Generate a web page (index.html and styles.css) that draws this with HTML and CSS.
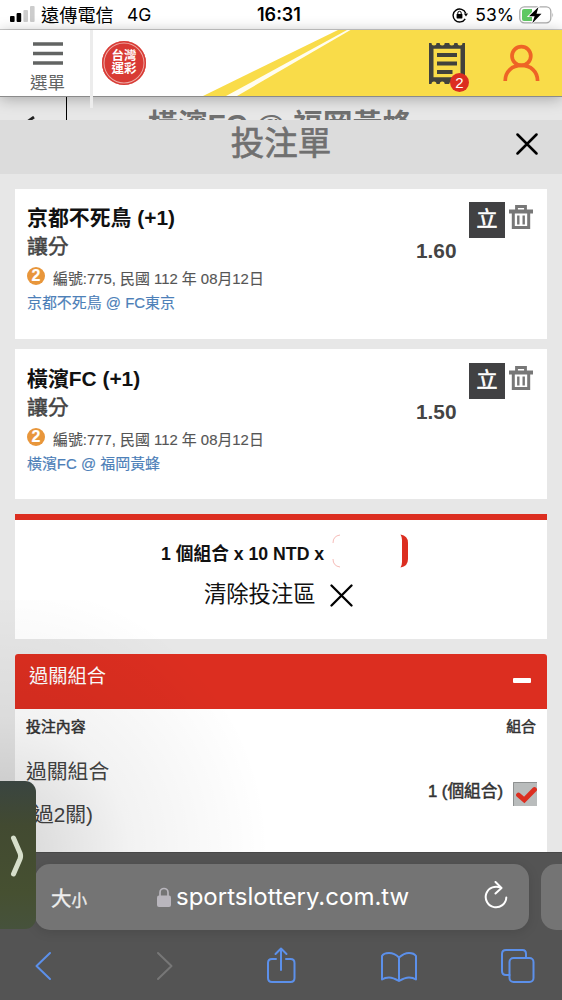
FILE: index.html
```html
<!DOCTYPE html>
<html lang="zh-Hant">
<head>
<meta charset="utf-8">
<title>投注單</title>
<link rel="stylesheet" href="styles.css">
</head>
<body>
<div class="phone">
  <div class="status">
    <svg class="signal" width="26" height="16" viewBox="0 0 26 16"><rect x="0" y="10" width="4.6" height="6" rx="1" fill="#000"/><rect x="6.6" y="7" width="4.6" height="9" rx="1" fill="#000"/><rect x="13.4" y="4" width="4.6" height="12" rx="1" fill="#ccc"/><rect x="20" y="0" width="4.6" height="16" rx="1" fill="#ccc"/></svg>
    <span class="carrier">遠傳電信</span><span class="net">4G</span>
    <span class="clock">16:31</span>
    <span class="power">
      <svg width="16" height="16" viewBox="0 0 16 16"><path d="M13.7 6.2A6.5 6.5 0 1 0 13.2 11.8" fill="none" stroke="#000" stroke-width="1.4"/><path d="M11.8 6.5h4.2l-2 3z"/><rect x="4.6" y="7" width="5.8" height="4.4" rx=".6"/><path d="M5.800 7.200V6a1.700 1.700 0 0 1 3.400 0v1.200" fill="none" stroke="#000" stroke-width="1"/></svg>
      <span class="percent">53%</span>
      <svg width="35" height="18" viewBox="0 0 35 18"><rect x=".8" y=".8" width="31" height="16" rx="4.5" fill="#fff" stroke="#aaa" stroke-width="1.3"/><path d="M5 3h8v12H5a2 2 0 0 1-2-2V5a2 2 0 0 1 2-2z" fill="#5fc863"/><path d="M33.400 6.500q1.600 2.500 0 5z" fill="#aaa"/><path d="M19.500 1 10 10.200h5.600L13.300 17.200 22.500 7.800h-5z" stroke="#fff" stroke-width="1.800" paint-order="stroke"/></svg>
    </span>
  </div>

  <div class="header">
    <svg class="ribbon" width="562" height="66" viewBox="0 0 562 66"><path d="M203 66 338 0H562V66z" fill="#f9dc49"/><path d="M226 66 347 0h3.500L237 66z" fill="#fffdf0"/></svg>
    <div class="menu">
      <svg width="30" height="24" viewBox="0 0 30 24"><path d="M0 2h30M0 11.5h30M0 21h30" stroke="#626463" stroke-width="3.6"/></svg>
      <span>選單</span>
    </div>
    <div class="logo"><span>台灣</span><span>運彩</span></div>
    <div class="tools">
      <div class="ticket">
        <svg width="37" height="42" viewBox="0 0 37 42"><path fill="#41423c" fill-rule="evenodd" d="M0 0h2.500a2.500 2.500 0 0 0 5 0h3.200a2.500 2.500 0 0 0 5 0h4.600a2.500 2.500 0 0 0 5 0h3.200a2.500 2.500 0 0 0 5 0H36v41h-2.500a2.500 2.500 0 0 0-5 0h-3.200a2.500 2.500 0 0 0-5 0h-4.600a2.500 2.500 0 0 0-5 0H7.500a2.500 2.500 0 0 0-5 0H0zM4.500 5.800v28.500h27V5.800z"/><path d="M8 12h20M8 20.500h20M8 29h15.500" stroke="#41423c" stroke-width="4.200"/></svg>
        <b class="badge">2</b>
      </div>
      <svg width="37" height="38" viewBox="0 0 37 38"><g fill="none" stroke="#ee6426" stroke-width="3.700"><circle cx="18.400" cy="12" r="9.400"/><path d="M2.200 37c0-9.800 7-15.600 16.200-15.600S34.600 27.200 34.600 37"/></g></svg>
    </div>
  </div>

  <div class="underlay">
    <svg class="back" width="8" height="5" viewBox="0 0 8 5"><path d="M0 6 7 1" stroke="#222" stroke-width="2.800"/></svg>
    <div class="match">橫濱FC @ 福岡黃蜂</div>
  </div>

  <div class="sheet-title">
    <h1>投注單</h1>
    <svg class="close" width="22" height="22" viewBox="0 0 22 22"><path d="M1.500 1.500 20.500 20.500M20.500 1.500 1.500 20.500" stroke="#000" stroke-width="2.500" stroke-linecap="round"/></svg>
  </div>

  <div class="sheet">
    <div class="card bet">
      <div class="info">
        <h2>京都不死鳥 (+1)</h2>
        <h3>讓分</h3>
        <p class="meta"><b class="dot">2</b><span>編號:775, 民國 112 年 08月12日</span></p>
        <a class="game">京都不死鳥 @ FC東京</a>
      </div>
      <div class="odds">1.60</div>
      <div class="stand">立</div>
      <svg class="trash" width="24" height="24" viewBox="0 0 24 24"><path d="M0 6.500h24" stroke="#777" stroke-width="4"/><path d="M7.500 6V1.500h9V6" fill="none" stroke="#777" stroke-width="2.800"/><path d="M4.300 7v15.500h15.400V7" fill="none" stroke="#777" stroke-width="3"/><path d="M9.300 10.500v9M14.700 10.500v9" stroke="#777" stroke-width="2.400"/></svg>
    </div>

    <div class="card bet second">
      <div class="info">
        <h2>橫濱FC (+1)</h2>
        <h3>讓分</h3>
        <p class="meta"><b class="dot">2</b><span>編號:777, 民國 112 年 08月12日</span></p>
        <a class="game">橫濱FC @ 福岡黃蜂</a>
      </div>
      <div class="odds">1.50</div>
      <div class="stand">立</div>
      <svg class="trash" width="24" height="24" viewBox="0 0 24 24"><path d="M0 6.500h24" stroke="#777" stroke-width="4"/><path d="M7.500 6V1.500h9V6" fill="none" stroke="#777" stroke-width="2.800"/><path d="M4.300 7v15.500h15.400V7" fill="none" stroke="#777" stroke-width="3"/><path d="M9.300 10.500v9M14.700 10.500v9" stroke="#777" stroke-width="2.400"/></svg>
    </div>

    <div class="card summary">
      <div class="stake"><span>1 個組合 x 10 NTD x</span>
        <svg width="76" height="34" viewBox="0 0 76 34"><path d="M8 1Q1 2 1 9M1 25q0 7 7 8" fill="none" stroke="#f3aaa5" stroke-width=".8"/><path d="M68.500.500Q76 1.500 76 9V25Q76 32.500 68.500 33.500 70 31 70 28V6Q70 3 68.500.500z" fill="#dc2e20"/></svg>
      </div>
      <div class="clear"><span>清除投注區</span>
        <svg width="23" height="23" viewBox="0 0 23 23"><path d="M1.500 1.500 21.500 21.500M21.500 1.500 1.500 21.500" stroke="#000" stroke-width="2.300" stroke-linecap="round"/></svg>
      </div>
    </div>

    <div class="combo">
      <div class="combo-head"><span>過關組合</span><i class="minus"></i></div>
      <div class="columns"><span>投注內容</span><span>組合</span></div>
      <div class="option">
        <div class="option-name">過關組合<br>(過2關)</div>
        <div class="option-count"><span>1 (個組合)</span>
          <svg width="24" height="24" viewBox="0 0 24 24"><path d="M0 0h24v24H0z" fill="#b9bcbc"/><path d="M.5 24V.5H24" fill="none" stroke="#8e9191"/><path d="m5.500 13 5.800 5L21.500 7.500" fill="none" stroke="#dc2e20" stroke-width="4.800" stroke-linecap="round"/></svg>
        </div>
      </div>
    </div>
  </div>

  <div class="browser">
    <div class="address-row">
      <div class="address">
        <span class="size">大<small>小</small></span>
        <span class="url"><svg width="14" height="21" viewBox="0 0 14 21"><rect y="8.500" width="14" height="11.500" rx="2" fill="#b9b6bd"/><path d="M3 9V5.500a4 4 0 0 1 8 0V9" fill="none" stroke="#b9b6bd" stroke-width="1.700"/></svg><span>sportslottery.com.tw</span></span>
        <svg class="reload" width="24" height="28" viewBox="0 0 24 28"><g fill="none" stroke="#fff" stroke-width="2" stroke-linecap="round" stroke-linejoin="round"><path d="M22.300 16.500A10.300 10.300 0 1 1 17 7"/><path d="m11.500 1 6 6-6 5.500"/></g></svg>
      </div>
      <div class="next-tab"></div>
    </div>
    <div class="toolbar">
      <svg width="562" height="70" viewBox="0 1 562 70"><g fill="none" stroke="#5c90ea" stroke-width="2" stroke-linecap="round" stroke-linejoin="round"><path d="M50 24 36.500 37 50 50"/><path d="M158 24l13.500 13L158 50" stroke="#777"/><path d="M276 30h-4q-4 0-4 4v15q0 4 4 4h18.500q4 0 4-4V34q0-4-4-4h-4.500M281 41V19.500M275.500 25l5.500-5.500L286.500 25"/><path d="M399 28.500Q394.500 24 389 24t-7 3v23.500q3-2 7-2t10 3.500q6-3.500 10-3.500t7 2V27q-2-3-7-3t-10 4.500V52"/><rect x="509.500" y="29" width="24" height="24" rx="4"/><path d="M509.500 46H506q-4 0-4-4V25q0-4 4-4h16.500q3.500 0 3.500 4v4"/></g></svg>
    </div>
  </div>

  <div class="shade"></div>
  <div class="drawer"><svg width="14" height="42" viewBox="0 0 14 42"><path d="M3.500 3 10 18q1.200 3 0 6L3.500 39" fill="none" stroke="#d7dfcb" stroke-width="5" stroke-linecap="round"/></svg></div>
</div>
</body>
</html>
```
FILE: styles.css
```css
* { box-sizing: border-box; }
body { margin: 0; font-family: "Liberation Sans", "Noto Sans CJK TC", sans-serif; color: #111; }
h1, h2, h3, p { margin: 0; }
svg { display: block; flex: none; }
span, b, h1, h2, h3, a { white-space: nowrap; }

.phone { position: relative; width: 562px; height: 1000px; overflow: hidden; background: #e7e7e7; display: flex; flex-direction: column; }

.status { height: 30px; flex: none; background: #fff; border-bottom: 1px solid #ccc; display: grid; grid-template-columns: 31px 86px 128px 1fr auto; align-items: center; padding: 1px 8px 0 10px; font-family: Inter, "Noto Sans CJK TC", sans-serif; line-height: 28px; color: #000; }
.signal { margin-top: -2px; }
.carrier { font-size: 18.200px; }
.net { font-size: 17.500px; }
.clock { font-size: 18px; font-weight: 600; padding-left: 2px; }
.power { display: flex; align-items: center; }
.percent { font-size: 17.500px; margin: 0 5px 0 7px; }

.header { position: relative; height: 67px; flex: none; background: #fff; border-bottom: 1px solid #8b8b8b; display: flex; box-shadow: 0 2px 14px rgba(0,0,0,.28); z-index: 2; }
.ribbon { position: absolute; left: 0; top: 0; z-index: -1; }
.menu { width: 93px; height: 78px; flex: none; border-right: 3px solid #ececec; display: flex; flex-direction: column; align-items: center; padding: 12px 0 0 5px; color: #626463; font-size: 17.500px; line-height: 26px; gap: 4px; }
.logo { width: 44px; height: 44px; margin: 11px 0 0 9px; border-radius: 50%; background: #d83a34; box-shadow: inset 0 0 0 1.500px #d83a34, inset 0 0 0 2.500px #eeaaa5; display: flex; flex-direction: column; align-items: center; padding-top: 9px; color: #fff; font-size: 12.500px; line-height: 13px; font-weight: 700; }
.tools { margin-left: auto; padding: 13px 22px 0 0; display: flex; gap: 37px; }
.tools > svg { margin-top: 1px; }
.ticket { position: relative; }
.badge { position: absolute; left: 21px; top: 30px; width: 19px; height: 19px; border-radius: 50%; background: #dc2e20; color: #fff; font-size: 15px; font-weight: 400; line-height: 19px; text-align: center; }

.underlay { height: 23px; flex: none; display: flex; overflow: hidden; }
.back { margin: 19px 0 0 27px; }
.match { margin-left: 31px; border-left: 1.500px solid #000; flex: 1; padding-left: 81px; color: #707070; font-weight: 700; font-size: 29.800px; line-height: 30px; padding-top: 13px; white-space: nowrap; }

.sheet-title { height: 54px; flex: none; background: #dcdcdc; display: grid; grid-template-columns: 1fr auto 1fr; align-items: center; }
.sheet-title h1 { grid-column: 2; color: #707070; font-size: 33.500px; font-weight: 400; -webkit-text-stroke: .7px #707070; line-height: 40px; margin-top: -6px; }
.close { justify-self: end; margin: -6px 24px 0 0; }

.sheet { flex: 1; min-height: 0; padding: 15px 15px 0; overflow: hidden; }
.card { background: #fff; }
.bet { height: 150px; padding: 14px 14px 0 12px; display: grid; grid-template-columns: 389px 53px 40px 24px; align-items: start; }
.second { margin-top: 10px; padding-top: 15px; }
.bet h2 { font-size: 20.900px; line-height: 29px; font-weight: 700; }
.bet h3 { font-size: 20.800px; line-height: 29px; font-weight: 400; -webkit-text-stroke: .5px #444; color: #444; }
.meta { display: flex; height: 32px; color: #555; font-size: 14.900px; line-height: 37px; -webkit-text-stroke: .15px; }
.dot { width: 18px; height: 18px; border-radius: 50%; background: #e8963b; color: #fff; font-size: 16px; line-height: 18px; text-align: center; margin: 6px 8px 0 0; }
.game { display: block; font-size: 14.950px; line-height: 19px; color: #4d80b8; -webkit-text-stroke: .15px; }
.odds { font-size: 20.800px; line-height: 24px; font-weight: 700; color: #444; margin-top: 36px; }
.stand { width: 36px; height: 36px; background: #414143; color: #fff; font-size: 21px; line-height: 34px; text-align: center; margin-top: -1px; -webkit-text-stroke: .6px; }
.trash { margin-top: 2px; }

.summary { height: 125px; margin-top: 15px; border-top: 6px solid #dc2e20; padding-top: 14px; }
.stake { display: flex; gap: 6px; align-items: center; padding-left: 146px; font-size: 17.700px; font-weight: 700; line-height: 34px; }
.stake span { width: 165px; padding-top: 6px; line-height: 28px; }
.clear { display: flex; gap: 14px; align-items: center; padding-left: 189px; font-size: 22.300px; line-height: 44px; margin-top: 5px; }

.combo { margin-top: 15px; height: 250px; background: #fff; border-radius: 3px 3px 0 0; overflow: hidden; }
.combo-head { height: 55px; background: #dc2e20; color: #fff; padding: 9px 16px 0 14px; display: flex; justify-content: space-between; font-size: 19.300px; line-height: 28px; }
.minus { width: 18px; height: 5px; background: #fff; margin-top: 15px; border-radius: 1px; }
.columns { display: flex; justify-content: space-between; padding: 7px 11px 0; font-size: 14.900px; line-height: 22px; color: #333; -webkit-text-stroke: .5px; }
.option { display: flex; justify-content: space-between; padding: 12px 10px 0 11px; }
.option-name { font-size: 20.800px; line-height: 43px; color: #444; }
.option-count { display: flex; align-items: center; height: 86px; gap: 10px; font-size: 16.700px; color: #333; -webkit-text-stroke: .5px; }
.option-count span { line-height: 20px; padding-bottom: 2px; }
.option-count svg { margin-top: 1px; }

.browser { height: 148px; flex: none; background: #545454; padding-top: 11px; border-top: 1px solid #484848; }
.address-row { display: flex; padding-left: 35px; gap: 12px; height: 66px; }
.address { width: 494px; height: 66px; border-radius: 15px; background: #747474; display: grid; grid-template-columns: 106px 1fr 24px; align-items: center; padding: 0 21px 0 16px; color: #fff; box-shadow: 0 2px 12px rgba(0,0,0,.12); flex: none; }
.size { font-size: 20.500px; color: #eee; -webkit-text-stroke: .4px; }
.size small { font-size: 15.500px; }
.url { display: flex; align-items: center; gap: 5px; font: 24px/30px Inter, sans-serif; }
.reload { margin-top: -4px; }
.toolbar { height: 70px; }
.next-tab { width: 40px; border-radius: 15px 0 0 15px; background: #747474; }

.shade { position: absolute; left: 0; top: 600px; width: 330px; height: 252px; background: radial-gradient(circle at 0 250px, rgba(0,0,0,.17), rgba(0,0,0,.05) 130px, transparent 270px); pointer-events: none; }
.drawer { position: absolute; left: 0; top: 781px; width: 36px; height: 148px; border-radius: 0 11px 11px 0; background: linear-gradient(#3a4541, #424a31 30%, #465031 75%, #46523c); padding: 54px 0 0 10px; }
```
